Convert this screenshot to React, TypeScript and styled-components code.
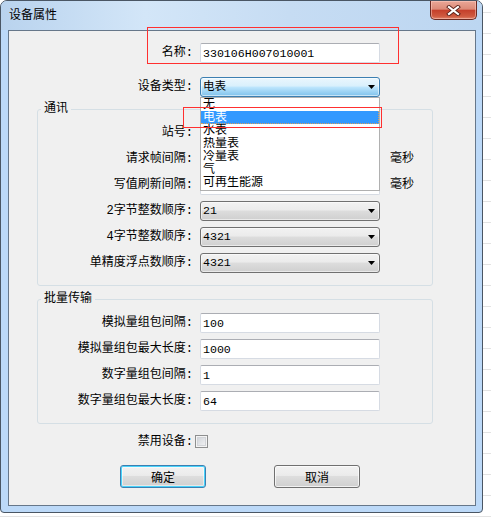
import React from "react";
import styled, { createGlobalStyle } from "styled-components";

const GlobalStyle = createGlobalStyle`
  html, body {
    margin: 0;
    padding: 0;
  }
  body {
    font-family: "Liberation Mono", "Noto Sans CJK SC", monospace;
    font-size: 12px;
    color: #000;
  }
`;

const DEVICE_TYPES = ["无", "电表", "水表", "热量表", "冷量表", "气", "可再生能源"];

/**
 * 桌面背景 (窗口右侧露出的白色区域)
 */
const Desktop = styled.div`
  width: 491px;
  height: 517px;
  overflow: hidden;
  background: repeating-linear-gradient(
    to bottom,
    #fff 0 12px,
    #e3e3e3 12px 13px,
    #fff 13px 21px
  );
`;

const Window = styled.div`
  position: relative;
  box-sizing: border-box;
  width: 483px;
  height: 513px;
  display: flex;
  flex-direction: column;
  border: 1px solid #4a5664;
  border-radius: 7px 7px 4px 4px;
  background: #bcd9f8;
`;

const TitleBar = styled.div`
  flex: none;
  height: 29px;
  display: flex;
  align-items: flex-start;
  justify-content: space-between;
  border-radius: 6px 6px 0 0;
  background: linear-gradient(
    to right,
    #b9d3ee 0%,
    #d3e6f8 30%,
    #c6dcf3 60%,
    #bcd6f1 100%
  );
`;

const Title = styled.span`
  padding: 6px 0 0 8px;
  line-height: 14px;
  font-family: "Noto Sans CJK SC", sans-serif;
  font-size: 12px;
  color: #000;
`;

const CloseButton = styled.div`
  width: 47px;
  height: 19px;
  margin-right: 5px;
  box-sizing: border-box;
  display: flex;
  align-items: center;
  justify-content: center;
  border: 1px solid #6b2a22;
  border-top: none;
  border-radius: 0 0 5px 5px;
  background: linear-gradient(
    to bottom,
    #eaa797 0%,
    #dc8a78 45%,
    #c5402b 52%,
    #cf5a40 85%,
    #e0846a 100%
  );
  box-shadow: inset 0 0 0 1px rgba(255, 210, 200, 0.5);
`;

const Client = styled.div`
  flex: 1;
  margin: 0 6px 6px 7px;
  border: 1px solid #66778a;
  background: #f0f0f0;
  display: flex;
  flex-direction: column;
  padding-top: 12px;
`;

const Row = styled.div<{ $gap?: number }>`
  display: flex;
  align-items: center;
  height: 20px;
  margin-top: ${(p) => p.$gap ?? 0}px;
`;

const Label = styled.span<{ $width: number; $pad?: number }>`
  flex: none;
  box-sizing: border-box;
  width: ${(p) => p.$width}px;
  padding-right: ${(p) => p.$pad ?? 7}px;
  text-align: right;
  white-space: nowrap;
  line-height: 14px;
`;

const TextBox = styled.input`
  box-sizing: border-box;
  width: 180px;
  height: 20px;
  margin: 0;
  padding: 0 2px;
  border: 1px solid #d6dbe3;
  border-top-color: #abadb3;
  border-radius: 2px;
  background: #fff;
  font-family: "Liberation Mono", "Noto Sans CJK SC", monospace;
  font-size: 11.6px;
  color: #000;
  outline: none;
`;

const Suffix = styled.span`
  margin-left: 10px;
  line-height: 14px;
`;

const ComboWrap = styled.div`
  position: relative;
  z-index: 5;
`;

const Combo = styled.div<{ $focused?: boolean }>`
  box-sizing: border-box;
  width: 180px;
  height: 20px;
  display: flex;
  align-items: center;
  justify-content: space-between;
  padding: 0 4px 0 2px;
  border: 1px solid ${(p) => (p.$focused ? "#3c7fb1" : "#707070")};
  border-radius: 3px;
  font-size: 11.6px;
  background: ${(p) =>
    p.$focused
      ? "linear-gradient(to bottom, #eaf6fd 0%, #d9f0fc 45%, #bee6fd 50%, #7fc2ec 100%)"
      : "linear-gradient(to bottom, #f2f2f2 0%, #ebebeb 45%, #dddddd 50%, #cfcfcf 100%)"};
  box-shadow: inset 0 0 0 1px rgba(255, 255, 255, 0.55);
`;

const ComboText = styled.span`
  line-height: 14px;
`;

const DropList = styled.ul`
  position: absolute;
  top: 20px;
  left: 0;
  box-sizing: border-box;
  width: 180px;
  height: 94px;
  margin: 0;
  padding: 0;
  list-style: none;
  border: 1px solid #b0b0b0;
  background: #fff;
`;

const DropItem = styled.li<{ $selected?: boolean }>`
  box-sizing: border-box;
  height: 13px;
  line-height: 14px;
  padding-left: 2px;
  white-space: nowrap;
  overflow: hidden;
  font-size: 12px;
  color: ${(p) => (p.$selected ? "#fff" : "#000")};
  background: ${(p) => (p.$selected ? "#3399ff" : "transparent")};
  border: 1px dotted ${(p) => (p.$selected ? "#d8a060" : "transparent")};
  border-left: none;
  border-top: none;
`;

/* 截图上的红色标注框 */
const Marker = styled.div<{ $left: number; $top: number; $w: number; $h: number }>`
  position: absolute;
  left: ${(p) => p.$left}px;
  top: ${(p) => p.$top}px;
  width: ${(p) => p.$w}px;
  height: ${(p) => p.$h}px;
  box-sizing: border-box;
  border: 1px solid #ff3030;
  pointer-events: none;
  z-index: 10;
`;

const Group = styled.fieldset<{ $gap: number }>`
  margin: ${(p) => p.$gap}px 42px 0 28px;
  padding: 8px 0 12px 0;
  min-inline-size: 0;
  border: 1px solid #d5dfe5;
  border-radius: 3px;
  display: flex;
  flex-direction: column;
  gap: 6px;
`;

const Legend = styled.legend`
  margin-left: 3px;
  padding: 0 3px 0 3px;
  line-height: 12px;
  font-size: 12px;
`;

const CheckRow = styled.div`
  display: flex;
  align-items: center;
  height: 13px;
  margin-top: 11px;
`;

const CheckBox = styled.span`
  box-sizing: border-box;
  width: 13px;
  height: 13px;
  border: 1px solid #8e8f8f;
  background: linear-gradient(to bottom right, #cbcfd5, #f7f7f7);
  box-shadow: inset 0 0 0 1px #f4f4f4, inset 0 0 0 2px #d2d4d8;
`;

const ButtonRow = styled.div`
  display: flex;
  gap: 68px;
  padding-left: 111px;
  margin-top: 17px;
`;

const Button = styled.button<{ $default?: boolean }>`
  box-sizing: border-box;
  width: 86px;
  height: 23px;
  margin: 0;
  padding: 0;
  border: 1px solid ${(p) => (p.$default ? "#3c7fb1" : "#707070")};
  border-radius: 3px;
  background: linear-gradient(
    to bottom,
    #f2f2f2 0%,
    #ebebeb 45%,
    #dddddd 50%,
    #cfcfcf 100%
  );
  box-shadow: ${(p) =>
    p.$default
      ? "inset 0 0 0 1px #48d3fb, inset 0 0 0 2px rgba(255,255,255,0.5)"
      : "inset 0 0 0 1px rgba(255,255,255,0.7)"};
  font-family: "Noto Sans CJK SC", sans-serif;
  font-size: 12px;
  color: #000;
`;

const ArrowIcon = () => (
  <svg width="7" height="4" viewBox="0 0 7 4">
    <path d="M0 0H7L3.5 4Z" fill="#000" />
  </svg>
);

const CloseIcon = () => (
  <svg width="15" height="11" viewBox="0 0 15 11">
    <path
      d="M3 2L12 9M12 2L3 9"
      stroke="#5a2018"
      strokeWidth="4"
      strokeLinecap="square"
    />
    <path
      d="M3 2L12 9M12 2L3 9"
      stroke="#fff"
      strokeWidth="2.2"
      strokeLinecap="square"
    />
  </svg>
);

interface ComboProps {
  value: string;
  focused?: boolean;
}

const ComboBox = ({ value, focused }: ComboProps) => (
  <Combo $focused={focused}>
    <ComboText>{value}</ComboText>
    <ArrowIcon />
  </Combo>
);

const TOP_LABEL = 191;
const GROUP_LABEL = 162;

const App = () => {
  return (
    <Desktop>
      <GlobalStyle />
      <Window>
        <TitleBar>
          <Title>设备属性</Title>
          <CloseButton>
            <CloseIcon />
          </CloseButton>
        </TitleBar>
        <Client>
          <Row>
            <Label $width={TOP_LABEL}>名称:</Label>
            <TextBox readOnly value="330106H007010001" />
          </Row>
          <Row $gap={14}>
            <Label $width={TOP_LABEL}>设备类型:</Label>
            <ComboWrap>
              <ComboBox value="电表" focused />
              <DropList>
                {DEVICE_TYPES.map((t) => (
                  <DropItem key={t} $selected={t === "电表"}>
                    {t}
                  </DropItem>
                ))}
              </DropList>
            </ComboWrap>
          </Row>

          <Group $gap={6}>
            <Legend>通讯</Legend>
            <Row>
              <Label $width={GROUP_LABEL}>站号:</Label>
              <TextBox readOnly value="1" />
            </Row>
            <Row>
              <Label $width={GROUP_LABEL}>请求帧间隔:</Label>
              <TextBox readOnly value="" />
              <Suffix>毫秒</Suffix>
            </Row>
            <Row>
              <Label $width={GROUP_LABEL}>写值刷新间隔:</Label>
              <TextBox readOnly value="" />
              <Suffix>毫秒</Suffix>
            </Row>
            <Row>
              <Label $width={GROUP_LABEL}>2字节整数顺序:</Label>
              <ComboBox value="21" />
            </Row>
            <Row>
              <Label $width={GROUP_LABEL}>4字节整数顺序:</Label>
              <ComboBox value="4321" />
            </Row>
            <Row>
              <Label $width={GROUP_LABEL}>单精度浮点数顺序:</Label>
              <ComboBox value="4321" />
            </Row>
          </Group>

          <Group $gap={7}>
            <Legend>批量传输</Legend>
            <Row>
              <Label $width={GROUP_LABEL}>模拟量组包间隔:</Label>
              <TextBox readOnly value="100" />
            </Row>
            <Row>
              <Label $width={GROUP_LABEL}>模拟量组包最大长度:</Label>
              <TextBox readOnly value="1000" />
            </Row>
            <Row>
              <Label $width={GROUP_LABEL}>数字量组包间隔:</Label>
              <TextBox readOnly value="1" />
            </Row>
            <Row>
              <Label $width={GROUP_LABEL}>数字量组包最大长度:</Label>
              <TextBox readOnly value="64" />
            </Row>
          </Group>

          <CheckRow>
            <Label $width={186} $pad={2}>
              禁用设备:
            </Label>
            <CheckBox />
          </CheckRow>

          <ButtonRow>
            <Button $default>确定</Button>
            <Button>取消</Button>
          </ButtonRow>
        </Client>
        <Marker $left={146} $top={26} $w={252} $h={37} />
        <Marker $left={182} $top={106} $w={199} $h={21} />
      </Window>
    </Desktop>
  );
};

export default App;
